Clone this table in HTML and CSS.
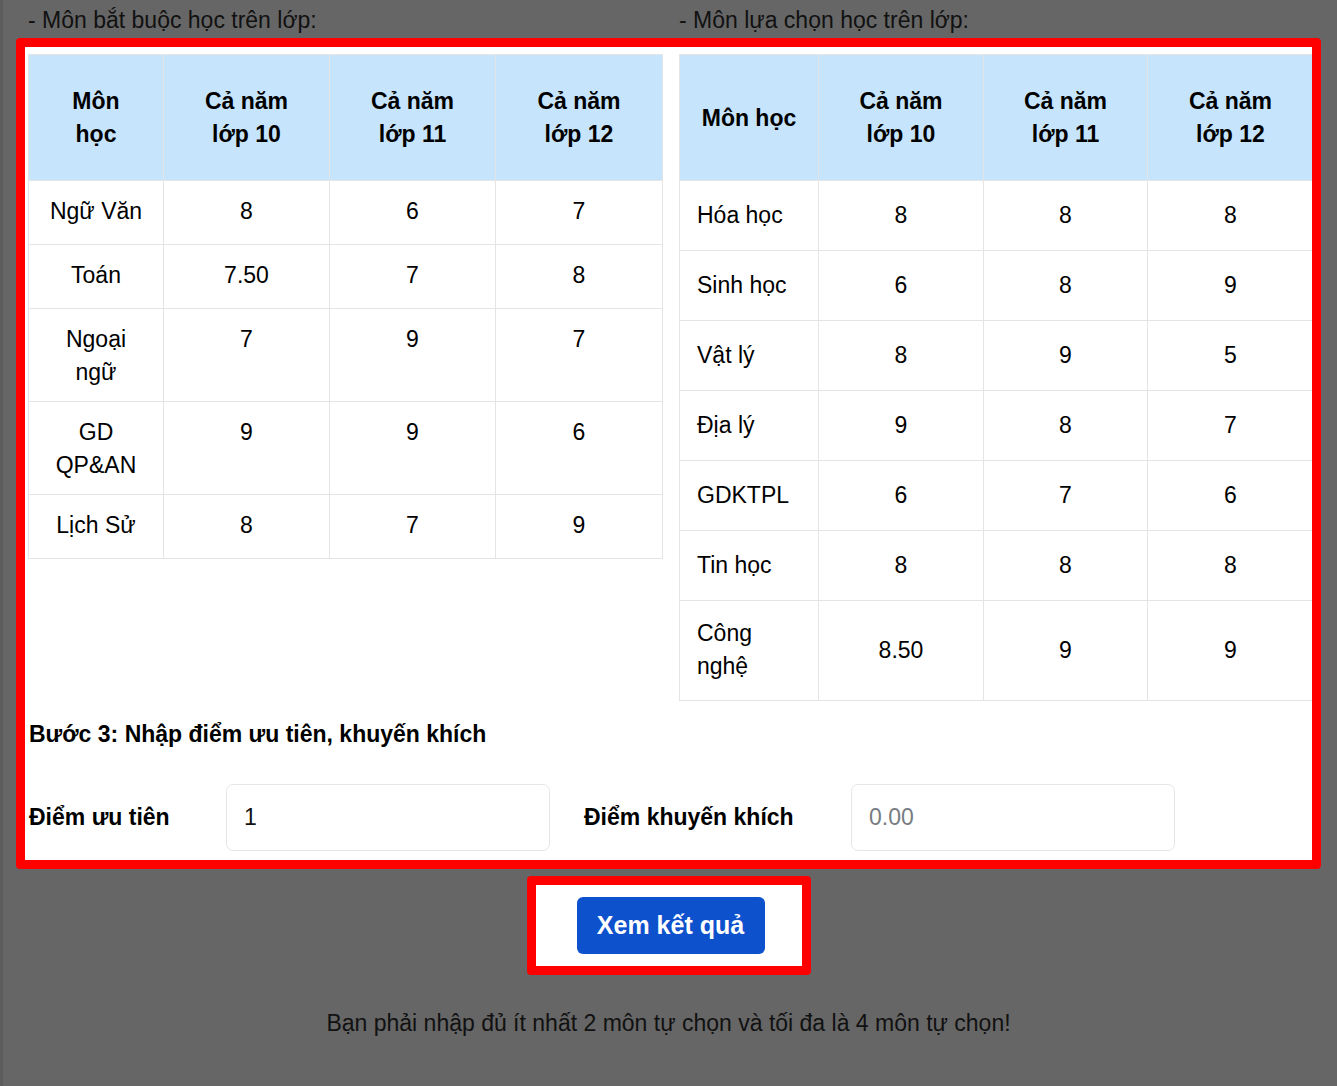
FILE: index.html
```html
<!DOCTYPE html>
<html lang="vi">
<head>
<meta charset="utf-8">
<title>Tính điểm</title>
<link rel="stylesheet" href="styles.css">
</head>
<body>
<div class="page">
  <div class="captions">
    <div class="caption">- Môn bắt buộc học trên lớp:</div>
    <div class="caption">- Môn lựa chọn học trên lớp:</div>
  </div>

  <section class="panel">
    <div class="tables">
      <table class="grade grade-left">
        <colgroup><col class="c1"><col class="c2"><col class="c3"><col class="c4"></colgroup>
        <thead>
          <tr><th>Môn<br>học</th><th>Cả năm<br>lớp 10</th><th>Cả năm<br>lớp 11</th><th>Cả năm<br>lớp 12</th></tr>
        </thead>
        <tbody>
          <tr><td>Ngữ Văn</td><td>8</td><td>6</td><td>7</td></tr>
          <tr><td>Toán</td><td>7.50</td><td>7</td><td>8</td></tr>
          <tr class="two"><td>Ngoại<br>ngữ</td><td>7</td><td>9</td><td>7</td></tr>
          <tr class="two"><td>GD<br>QP&amp;AN</td><td>9</td><td>9</td><td>6</td></tr>
          <tr><td>Lịch Sử</td><td>8</td><td>7</td><td>9</td></tr>
        </tbody>
      </table>

      <table class="grade grade-right">
        <colgroup><col class="d1"><col class="d2"><col class="d3"><col class="d4"></colgroup>
        <thead>
          <tr><th>Môn học</th><th>Cả năm<br>lớp 10</th><th>Cả năm<br>lớp 11</th><th>Cả năm<br>lớp 12</th></tr>
        </thead>
        <tbody>
          <tr><td>Hóa học</td><td>8</td><td>8</td><td>8</td></tr>
          <tr><td>Sinh học</td><td>6</td><td>8</td><td>9</td></tr>
          <tr><td>Vật lý</td><td>8</td><td>9</td><td>5</td></tr>
          <tr><td>Địa lý</td><td>9</td><td>8</td><td>7</td></tr>
          <tr><td>GDKTPL</td><td>6</td><td>7</td><td>6</td></tr>
          <tr><td>Tin học</td><td>8</td><td>8</td><td>8</td></tr>
          <tr class="two"><td>Công<br>nghệ</td><td>8.50</td><td>9</td><td>9</td></tr>
        </tbody>
      </table>
    </div>

    <h3 class="step">Bước 3: Nhập điểm ưu tiên, khuyến khích</h3>

    <div class="fields">
      <label class="field-label label-1" for="uutien">Điểm ưu tiên</label>
      <input class="field-input" id="uutien" type="text" value="1">
      <label class="field-label label-2" for="khuyenkhich">Điểm khuyến khích</label>
      <input class="field-input" id="khuyenkhich" type="text" placeholder="0.00">
    </div>
  </section>

  <div class="actions">
    <button class="btn-result" type="button">Xem kết quả</button>
  </div>

  <p class="notice">Bạn phải nhập đủ ít nhất 2 môn tự chọn và tối đa là 4 môn tự chọn!</p>
</div>
</body>
</html>
```

FILE: styles.css
```css
* { box-sizing: border-box; }

html, body {
  margin: 0;
  padding: 0;
}

body {
  background: #666666;
  font-family: "Liberation Sans", Arial, sans-serif;
  font-size: 23px;
  line-height: 33px;
  color: #000;
  min-height: 1086px;
  border-left: 3px solid #5c5c5c;
}

.page {
  margin-left: -3px;
}

.captions {
  display: grid;
  grid-template-columns: 634px 634px;
  column-gap: 17px;
  padding: 4px 0 0 28px;
  height: 38px;
  color: #111;
}

.panel {
  margin: 0 16px;
  border: 9px solid #ff0000;
  border-radius: 4px;
  background: #fff;
  padding: 7px 0 9px 3px;
  overflow: hidden;
}

.tables {
  display: flex;
  align-items: flex-start;
  gap: 16px;
}

.grade {
  flex: 0 0 auto;
  width: 634px;
  table-layout: fixed;
  border-collapse: collapse;
}

.grade th,
.grade td {
  border: 1px solid #e4e4e4;
  text-align: center;
  font-weight: normal;
}

.grade th {
  background: #c6e4fb;
  font-weight: bold;
  padding: 30px 10px 29px;
  vertical-align: middle;
}

.grade-left .c1 { width: 135px; }
.grade-left .c2 { width: 166px; }
.grade-left .c3 { width: 166px; }
.grade-left .c4 { width: 167px; }

.grade-right .d1 { width: 139px; }
.grade-right .d2 { width: 165px; }
.grade-right .d3 { width: 164px; }
.grade-right .d4 { width: 166px; }

.grade-left td {
  vertical-align: top;
  padding: 14px 10px 16px;
}

.grade-left tr.two td {
  padding-bottom: 12px;
}

.grade-right td {
  vertical-align: middle;
  padding: 18px 10px;
}

.grade-right tr.two td {
  padding-top: 16px;
  padding-bottom: 17px;
}

.grade-right td:first-child {
  text-align: left;
  padding-left: 17px;
}

.step {
  margin: 17px 0 0 1px;
  font-size: 23px;
  line-height: 33px;
  font-weight: bold;
}

.fields {
  display: flex;
  align-items: center;
  margin-top: 33px;
  padding-left: 1px;
}

.field-label {
  font-weight: bold;
}

.label-1 { width: 197px; }

.label-2 {
  width: 267px;
  margin-left: 34px;
}

.field-input {
  width: 324px;
  height: 67px;
  border: 1px solid #e6e6e6;
  border-radius: 7px;
  padding: 0 17px;
  font-family: "Liberation Sans", Arial, sans-serif;
  font-size: 23px;
  color: #111;
  background: #fff;
  outline: none;
}

.field-input::placeholder {
  color: #777c82;
}

.actions {
  width: 284px;
  margin: 7px auto 0;
  border: 9px solid #ff0000;
  border-radius: 4px;
  background: #fff;
  padding: 12px 0;
  display: flex;
  justify-content: center;
}

.btn-result {
  width: 188px;
  height: 57px;
  margin-left: 4px;
  border: none;
  border-radius: 6px;
  background: #0d51cd;
  color: #fff;
  font-family: "Liberation Sans", Arial, sans-serif;
  font-size: 25px;
  font-weight: bold;
}

.notice {
  margin: 32px 0 0;
  text-align: center;
  color: #111;
}
```
